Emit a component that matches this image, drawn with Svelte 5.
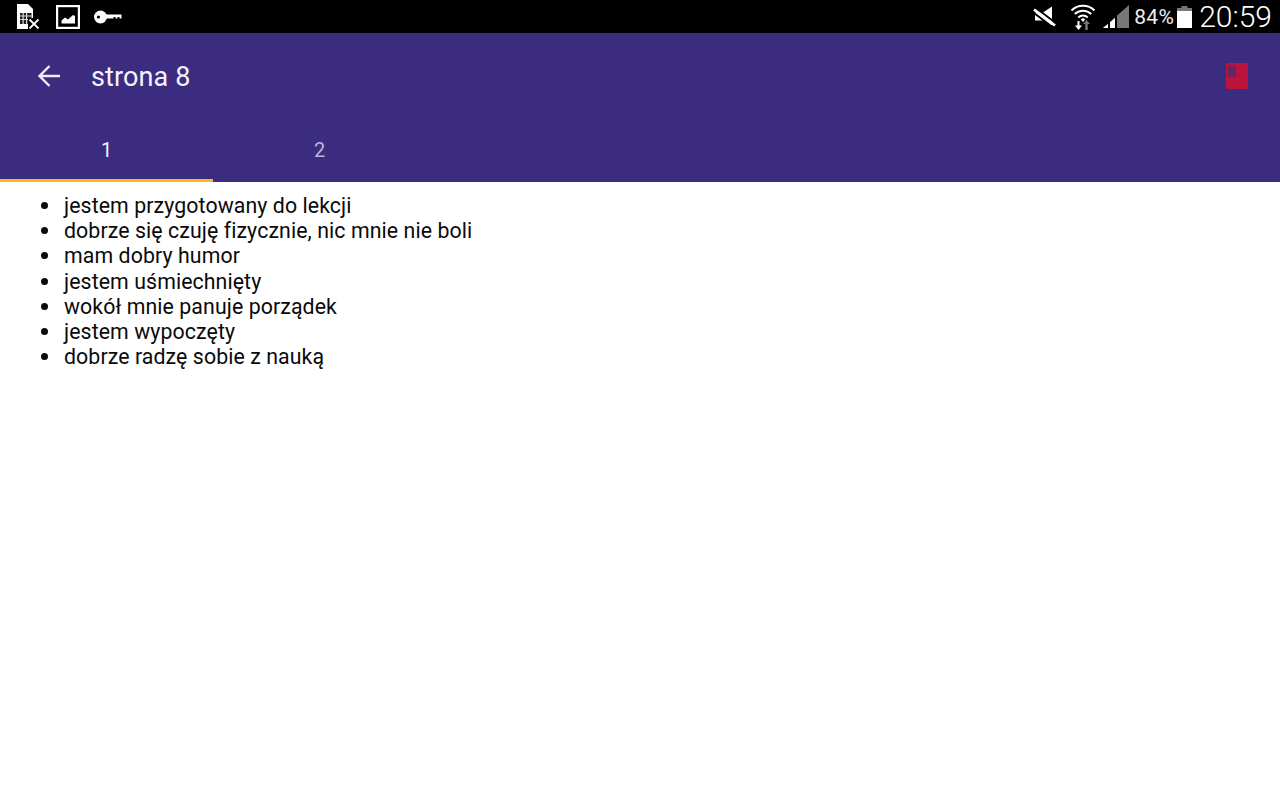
<script>
  const items = [
    'jestem przygotowany do lekcji',
    'dobrze się czuję fizycznie, nic mnie nie boli',
    'mam dobry humor',
    'jestem uśmiechnięty',
    'wokół mnie panuje porządek',
    'jestem wypoczęty',
    'dobrze radzę sobie z nauką'
  ];
</script>

<div class="screen">
  <div class="status">
    <div class="status-left">
      <svg width="24" height="25" viewBox="0 0 24 25">
        <path d="M1 0h11l5 5v20H1z" fill="#fff" />
        <path d="M4 9h11.500v11H4z" fill="#1a1a1a" />
        <path d="M4 11.500h11.500v1H4zM4 15h11.500v1H4zM6.500 9h1.200v11H6.500zM10 9h1.200v11H10z" fill="#ddd" />
        <path d="M12 14h12v11H12z" fill="#000" />
        <path d="M13.500 15.500l9 9M22.500 15.500l-9 9" stroke="#fff" stroke-width="1.800" fill="none" />
      </svg>
      <svg class="pic" width="24" height="24" viewBox="0 0 24 24">
        <rect x="1" y="1" width="22" height="22" fill="none" stroke="#fff" stroke-width="2.400" />
        <path d="M5.500 18.500v-3l3.500-3 3 2 5-4.500 2 1v7.500z" fill="#fff" />
      </svg>
      <svg class="key" width="28" height="14" viewBox="0 0 28 14">
        <circle cx="6.500" cy="7" r="6.500" fill="#fff" />
        <circle cx="4.500" cy="7" r="1.600" fill="#000" />
        <path d="M12 4.500h15.500v4h-2v-1.500h-2v1.500h-2v-1.500h-2v1.500h-7.500z" fill="#fff" />
      </svg>
    </div>
    <div class="status-right">
      <svg class="mute" width="26" height="24" viewBox="0 0 26 24">
        <path d="M21 1.500V21l-9-5.500H4V7.500h8z" fill="#fff" />
        <path d="M3 1.500l21 16M3 8l21 16" stroke="#000" stroke-width="2" />
        <path d="M3 4.500l21 16" stroke="#fff" stroke-width="2.800" />
      </svg>
      <svg class="wifi" width="26" height="28" viewBox="0 0 26 28">
        <path d="M1.500 7.500a16.500 16.500 0 0 1 23 0M4.800 11a11.800 11.800 0 0 1 16.400 0M8.300 14.500a6.800 6.800 0 0 1 9.400 0" fill="none" stroke="#fff" stroke-width="2" />
        <path d="M10.800 16.500a3 3 0 0 1 4.400 0L13 19z" fill="#fff" />
        <path d="M8.500 18v7.500" stroke="#fff" stroke-width="2" />
        <path d="M5 22.500h7L8.500 27z" fill="#fff" />
        <path d="M16.500 20v7" stroke="#777" stroke-width="2.500" />
        <path d="M13 21l3.500-4 3.500 4z" fill="#777" />
      </svg>
      <svg class="signal" width="26" height="24" viewBox="0 0 26 24">
        <path d="M0 23L26 0v23H0z" fill="#777" />
        <path d="M0 23l5-4v4zM7 17.500l5-4.500v10H7z" fill="#fff" />
        <path d="M6 17v6.500M13 11v12.500" stroke="#000" stroke-width="2" />
      </svg>
      <span class="battery-text">84%</span>
      <svg class="battery" width="15" height="22" viewBox="0 0 15 22">
        <path d="M4.500 0h6v2h-6z" fill="#777" />
        <path d="M0 2h15v3H0z" fill="#777" />
        <path d="M0 5h15v17H0z" fill="#fff" />
      </svg>
      <span class="clock">20:59</span>
    </div>
  </div>

  <header class="appbar">
    <div class="toolbar">
      <svg class="back" width="24" height="24" viewBox="0 0 24 24">
        <path d="M23 12H3M12.500 2L2.500 12l10 10" fill="none" stroke="#f0ecf8" stroke-width="2.400" />
      </svg>
      <h1>strona 8</h1>
      <svg class="book" width="22" height="26" viewBox="0 0 22 26">
        <rect width="22" height="26" rx="1" fill="#bb123e" />
        <path d="M2 2h8v12H2z" fill="#6a2560" />
      </svg>
    </div>
    <div class="tabs">
      <div class="tab active">1</div>
      <div class="tab">2</div>
    </div>
  </header>

  <ul>
    {#each items as item}
      <li>{item}</li>
    {/each}
  </ul>
</div>

<style>
  :global(body) {
    margin: 0;
    background: #fff;
  }

  .screen {
    width: 1280px;
    height: 800px;
    overflow: hidden;
    font-family: Roboto, "Liberation Sans", sans-serif;
    background: #fff;
  }

  .status {
    height: 33px;
    background: #000;
    display: flex;
    align-items: center;
    justify-content: space-between;
    padding: 0 8px 0 16px;
  }

  .status-left,
  .status-right {
    display: flex;
    align-items: center;
  }

  .pic {
    margin-left: 16px;
  }

  .key {
    margin-left: 14px;
  }

  .wifi {
    margin-left: 13px;
  }

  .signal {
    margin-left: 7px;
  }

  .battery-text {
    margin-left: 5px;
    color: #eee;
    font-size: 21px;
    letter-spacing: 0.3px;
  }

  .battery {
    margin-left: 3px;
  }

  .clock {
    margin-left: 7px;
    color: #fff;
    font-size: 30px;
    font-weight: 300;
  }

  .appbar {
    height: 149px;
    background: #3c2c7f;
    display: flex;
    flex-direction: column;
  }

  .toolbar {
    height: 86px;
    display: flex;
    align-items: center;
    padding: 0 32px 0 37px;
  }

  h1 {
    margin: 2px 0 0 30px;
    flex: 1;
    color: #f5f2fb;
    font-size: 27px;
    font-weight: 400;
    letter-spacing: 0.12px;
  }

  .tabs {
    flex: 1;
    display: flex;
  }

  .tab {
    width: 213px;
    display: flex;
    align-items: center;
    justify-content: center;
    box-sizing: border-box;
    padding-top: 1px;
    border-bottom: 3px solid transparent;
    color: #bdb4dc;
    font-size: 20px;
  }

  .tab.active {
    color: #f5f2fb;
    border-bottom-color: #fdb71f;
  }

  ul {
    margin: 11px 0 0;
    padding: 0 0 0 41px;
    list-style: none;
    color: #0a0a0a;
    font-size: 21.300px;
    line-height: 25.170px;
    letter-spacing: 0.09px;
  }

  li {
    display: flex;
  }

  li::before {
    content: "";
    flex: none;
    width: 7px;
    height: 7px;
    margin: 9px 16px 0 0;
    border-radius: 50%;
    background: #0a0a0a;
  }
</style>
